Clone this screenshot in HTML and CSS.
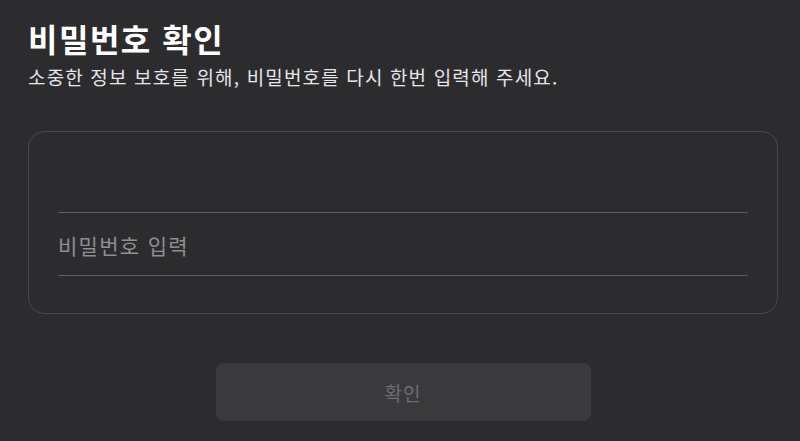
FILE: index.html
```html
<!DOCTYPE html>
<html lang="ko">
<head>
<meta charset="utf-8">
<link rel="stylesheet" href="styles.css">
</head>
<body>
<main class="page">
  <h1 class="title">비밀번호 확인</h1>
  <p class="subtitle">소중한 정보 보호를 위해, 비밀번호를 다시 한번 입력해 주세요.</p>
  <section class="card">
    <div class="field field-empty"></div>
    <div class="field"><span class="placeholder">비밀번호 입력</span></div>
  </section>
  <div class="actions">
    <button class="btn" type="button">확인</button>
  </div>
</main>
</body>
</html>
```
FILE: styles.css
```css
html, body {
  margin: 0;
  padding: 0;
  background: #2c2c2e;
  height: 100%;
}
body {
  font-family: "Noto Sans CJK KR", "Noto Sans", sans-serif;
  color: #ffffff;
}
.page {
  padding: 18px 22px 0 28px;
  display: flex;
  flex-direction: column;
}
.title {
  margin: 0;
  font-size: 32px;
  font-weight: 700;
  line-height: 40px;
  letter-spacing: 1.5px;
  color: #ffffff;
}
.subtitle {
  margin: 6px 0 0 0;
  font-size: 19px;
  line-height: 26px;
  letter-spacing: 1.15px;
  color: #e5e5ea;
}
.card {
  margin-top: 41px;
  border: 1px solid #48484a;
  border-radius: 16px;
  height: 183px;
  box-sizing: border-box;
  padding: 0 29px;
  display: flex;
  flex-direction: column;
}
.field {
  border-bottom: 1px solid #5c5c60;
  height: 62px;
  display: flex;
  align-items: center;
}
.field-empty {
  height: 80px;
}
.placeholder {
  font-size: 21px;
  letter-spacing: 1.3px;
  color: #8e8e93;
  padding-top: 2px;
}
.actions {
  display: flex;
  justify-content: center;
  margin-top: 49px;
}
.btn {
  width: 375px;
  height: 58px;
  border: none;
  border-radius: 8px;
  background: #3a3a3c;
  color: #6e6e73;
  font-family: inherit;
  font-size: 19px;
  letter-spacing: 1px;
}
```
